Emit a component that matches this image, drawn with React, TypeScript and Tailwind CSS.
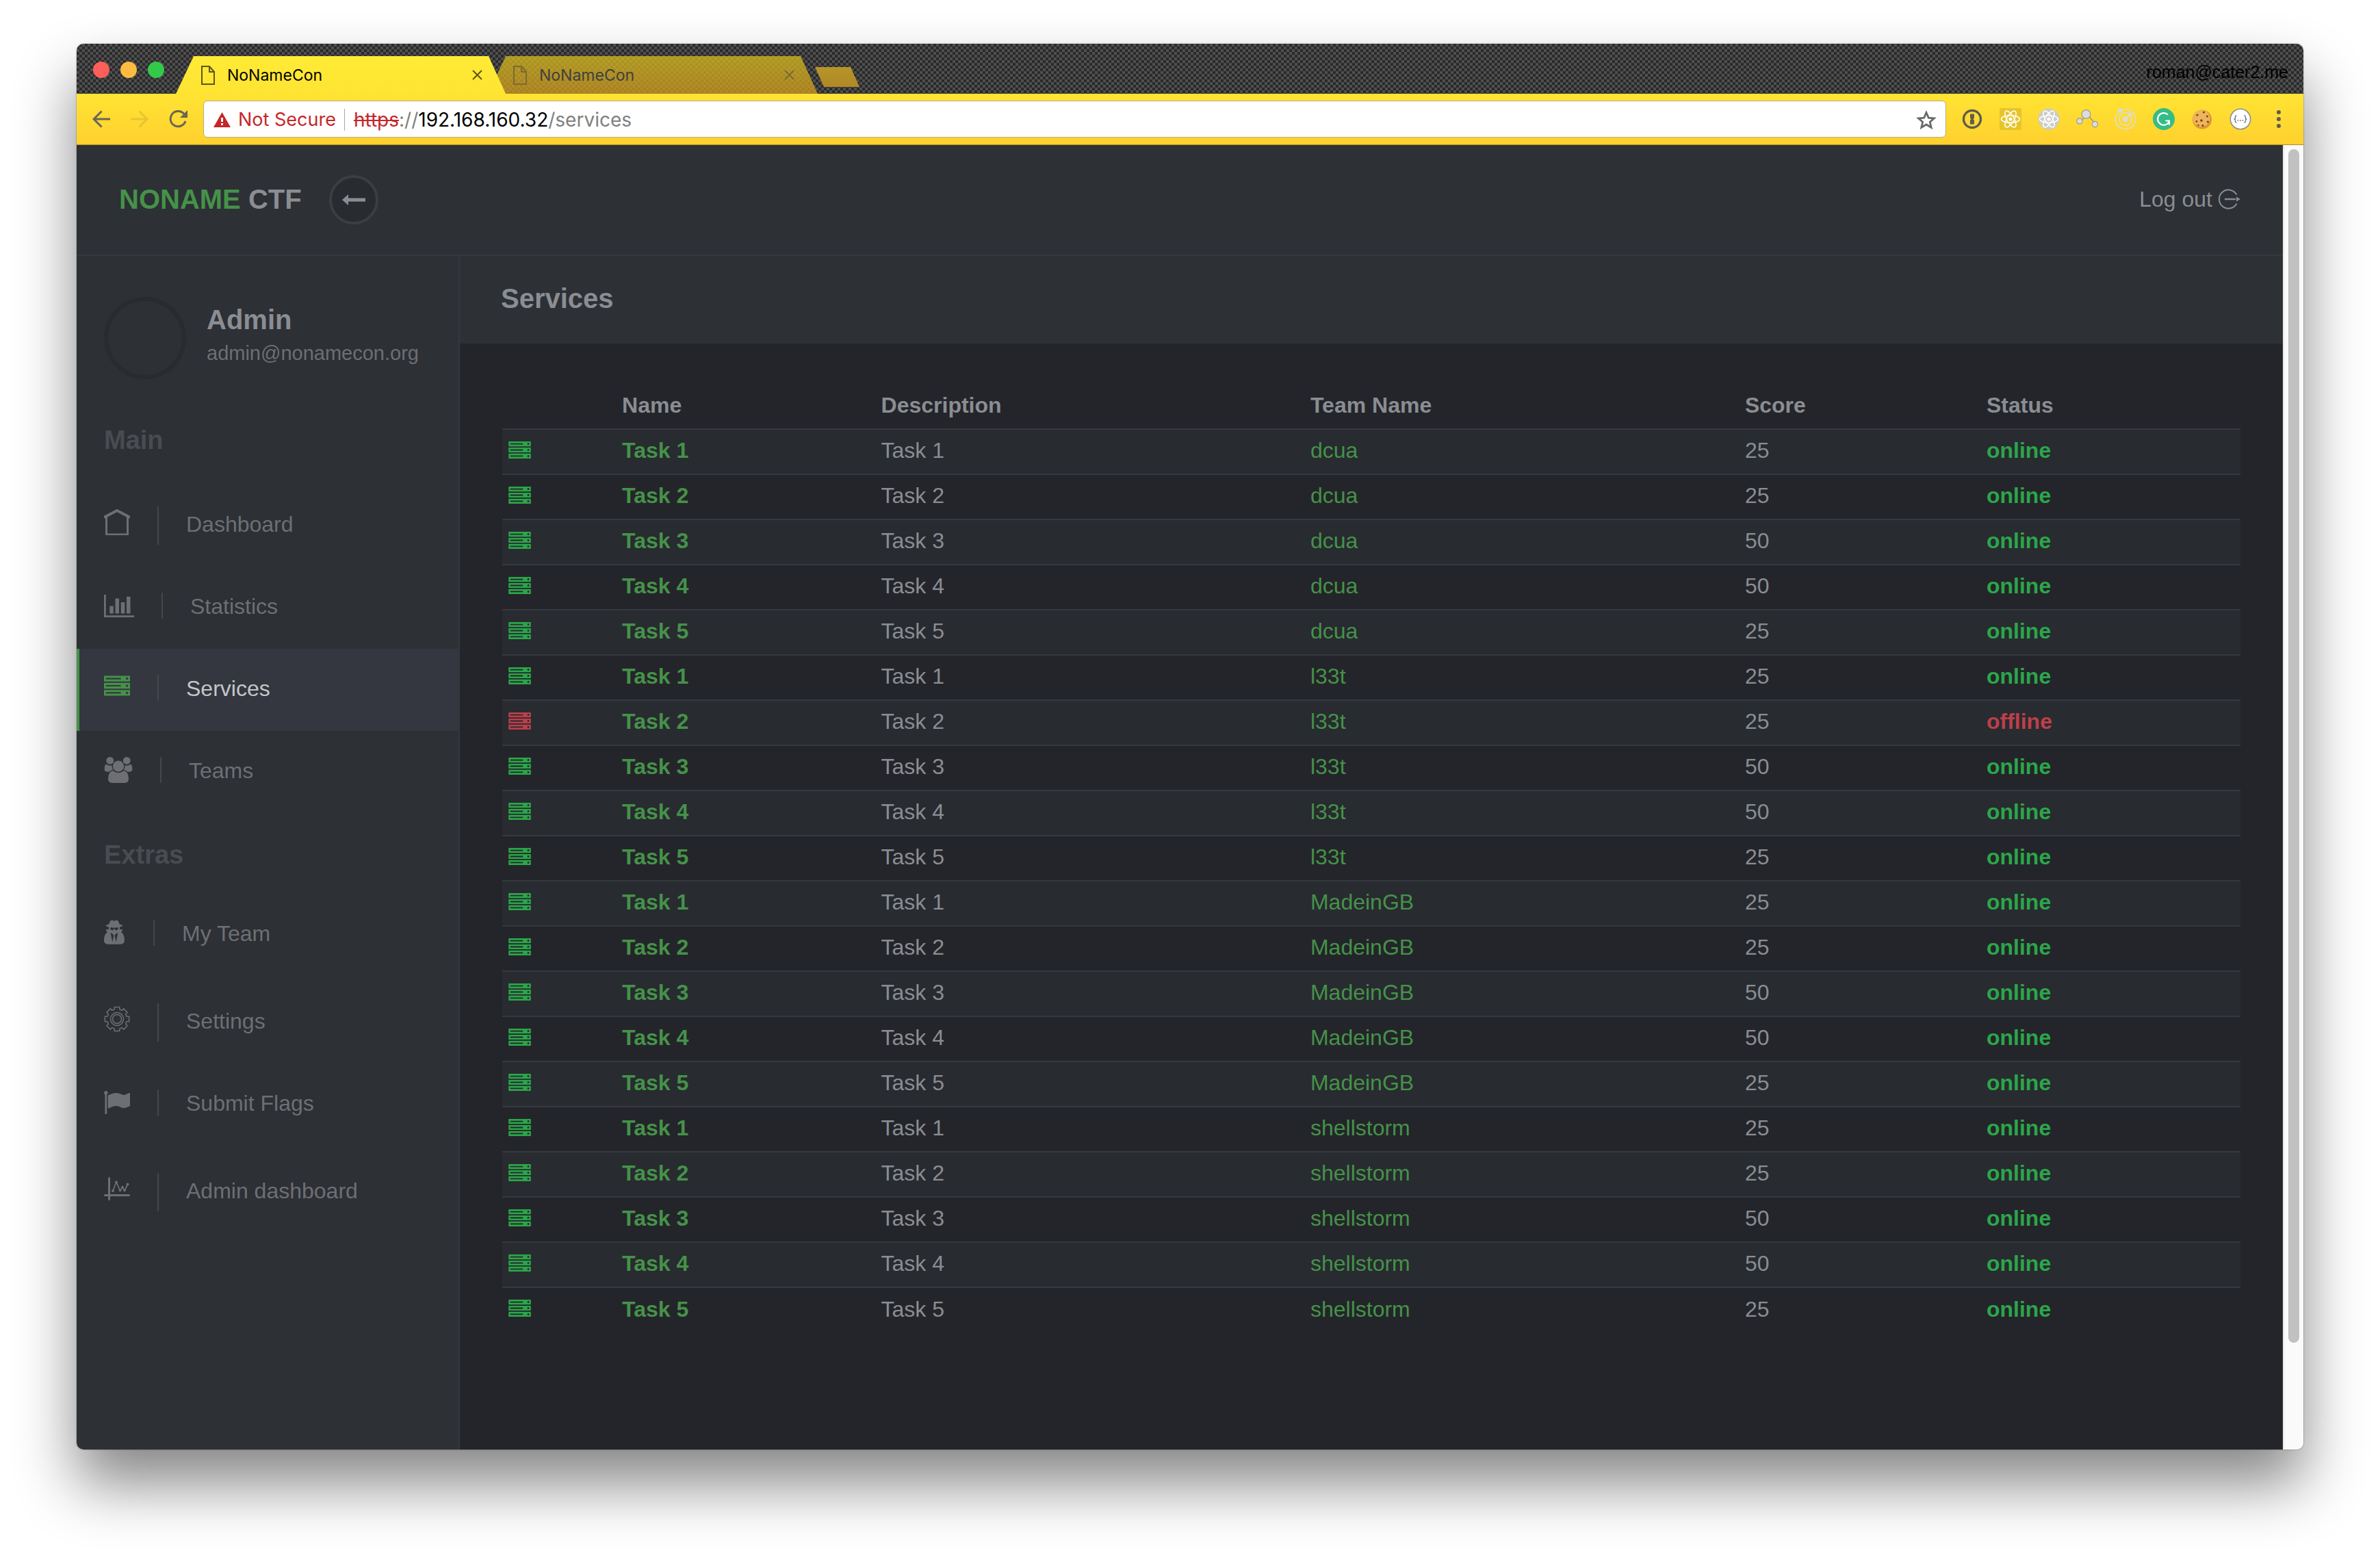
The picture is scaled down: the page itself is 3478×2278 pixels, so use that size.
import type { ReactNode } from "react";
import clsx from "clsx";

/* ---------- icons ---------- */

function PageIcon() {
  return (
    <svg className="h-7 w-5 shrink-0" viewBox="0 0 20 28" fill="none" stroke="currentColor" strokeWidth="2" aria-hidden="true">
      <path d="M1 1h11l7 8v18H1z" />
      <path d="M12 1v8h7" />
    </svg>
  );
}

function CloseIcon() {
  return (
    <svg className="size-[15px]" viewBox="0 0 15 15" fill="none" stroke="currentColor" strokeWidth="2" aria-hidden="true">
      <path d="M1 1l13 13M14 1L1 14" />
    </svg>
  );
}

function ServerIcon({ className }: { className: string }) {
  return (
    <svg className={className} viewBox="0 0 39 30" fill="currentColor" fillRule="evenodd" aria-hidden="true">
      {[0, 10.7, 21.4].map((y) => (
        <path
          key={y}
          transform={`translate(0 ${y})`}
          d="M0 0h39v8.600H0zM2.800 3.200h22.400v2.200H2.800zM34.500 2.500a1.800 1.800 0 1 0 .01 3.600a1.800 1.800 0 1 0-.01-3.600z"
        />
      ))}
    </svg>
  );
}

function HomeIcon() {
  return (
    <svg className="h-[38px] w-[38px]" viewBox="0 0 38 38" fill="none" stroke="currentColor" aria-hidden="true">
      <path d="M0 12L19 2l19 10" strokeWidth="4" />
      <path d="M3.500 11v26h31V11" strokeWidth="3" />
    </svg>
  );
}

function BarChartIcon() {
  return (
    <svg className="h-[33px] w-11" viewBox="0 128 2048 1536" fill="currentColor" aria-hidden="true">
      <path d="M640 896v512h-256v-512h256zm384-512v1024h-256v-1024h256zm1024 1152v128h-2048v-1536h128v1408h1920zm-640-896v768h-256v-768h256zm384-384v1152h-256v-1152h256z" />
    </svg>
  );
}

function UsersIcon() {
  return (
    <svg className="h-[38px] w-[42px]" viewBox="0 0 1920 1792" fill="currentColor" aria-hidden="true">
      <path d="M593 896q-162 5-265 128h-134q-82 0-138-40.5t-56-118.5q0-353 124-353 6 0 43.5 21t97.5 42.5 119 21.5q67 0 133-23-5 37-5 66 0 139 81 256zm1071 637q0 120-73 189.500t-194 69.500h-874q-121 0-194-69.500t-73-189.500q0-53 3.500-103.500t14-109 26.500-108.500 43-97.500 62-81 85.500-53.500 111.500-20q10 0 43 21.500t73 48 107 48 135 21.500 135-21.500 107-48 73-48 43-21.500q61 0 111.500 20t85.500 53.500 62 81 43 97.500 26.500 108.500 14 109 3.500 103.500zm-1024-1277q0 106-75 181t-181 75-181-75-75-181 75-181 181-75 181 75 75 181zm704 384q0 159-112.500 271.500t-271.500 112.500-271.500-112.500-112.500-271.500 112.500-271.500 271.500-112.500 271.500 112.500 112.500 271.500zm576 225q0 78-56 118.500t-138 40.500h-134q-103-123-265-128 81-117 81-256 0-29-5-66 66 23 133 23 59 0 119-21.500t97.500-42.500 43.500-21q124 0 124 353zm-128-609q0 106-75 181t-181 75-181-75-75-181 75-181 181-75 181 75 75 181z" />
    </svg>
  );
}

function SpyIcon() {
  return (
    <svg className="h-[38px] w-8" viewBox="128 0 1408 1792" preserveAspectRatio="xMinYMid meet" fill="currentColor" fillRule="evenodd" aria-hidden="true">
      <path d="M704 1536l96-448-96-128-128-64zm256 0l128-640-128 64-96 128zm160-988q-2-4-4-6-10-8-96-8-70 0-167 19-7 2-21 2t-21-2q-97-19-167-19-86 0-96 8-2 2-4 6 2 18 4 27 2 3 7.500 6.500t7.500 10.500q2 4 7.500 20.500t7 20.500 7.500 17 8.500 17 9 14 12 13.500 14 9.500 17.500 8 20.500 4 24.500 2q36 0 59-12.500t32.500-30 14.500-34.500 11.500-29.500 17.500-12.500h12q11 0 17.500 12.500t11.500 29.500 14.500 34.500 32.500 30 59 12.500q13 0 24.500-2t20.500-4 17.500-8 14-9.500 12-13.500 9-14 8.500-17 7.500-17 7-20.500 7.500-20.500q2-7 7.500-10.500t7.500-6.500q2-9 4-27zm416 879q0 121-73 190t-194 69h-874q-121 0-194-69t-73-190q0-61 4.500-118t19-125.500 37.500-123.500 63.500-103.500 93.500-74.500l-90-220h214q-22-64-22-128 0-12 2-32-194-40-194-96 0-57 210-99 17-62 51.500-134t70.500-114q32-37 76-37 30 0 84 31t84 31 84-31 84-31q44 0 76 37 36 42 70.500 114t51.500 134q210 42 210 99 0 56-194 96 7 81-20 160h214l-82 225q63 33 107.500 96.500t65.500 143.500 29 151.500 8 148.500z" />
    </svg>
  );
}

function FlagIcon() {
  return (
    <svg className="h-[34px] w-[38px]" viewBox="64 128 1728 1536" fill="currentColor" aria-hidden="true">
      <path d="M320 256q0 72-64 110v1266q0 13-9.500 22.500t-22.500 9.500h-64q-13 0-22.500-9.500t-9.500-22.500v-1266q-64-38-64-110 0-53 37.500-90.500t90.500-37.500 90.500 37.500 37.500 90.500zm1472 64v763q0 25-12.500 38.500t-39.500 27.500q-215 116-369 116-61 0-123.500-22t-108.500-48-115.500-48-142.500-22q-192 0-464 146-17 9-33 9-26 0-45-19t-19-45v-742q0-32 31-55 21-14 79-43 236-120 421-120 107 0 200 29t219 88q38 19 88 19 54 0 117.500-21t110-47 88-47 54.500-21q26 0 45 19t19 45z" />
    </svg>
  );
}

function gearOutline(): string {
  const parts: string[] = [];
  for (let i = 0; i < 8; i++) {
    const mid = (i * Math.PI) / 4 - Math.PI / 2;
    const corners: [number, number][] = [
      [-0.27, 14.5],
      [-0.21, 18],
      [0.21, 18],
      [0.27, 14.5],
    ];
    for (const [da, r] of corners) {
      const x = (19 + r * Math.cos(mid + da)).toFixed(2);
      const y = (19 + r * Math.sin(mid + da)).toFixed(2);
      parts.push(`${x} ${y}`);
    }
  }
  return `M${parts.join("L")}Z`;
}
const GEAR = gearOutline();

function GearIcon() {
  return (
    <svg className="size-[38px]" viewBox="0 0 38 38" fill="none" stroke="currentColor" strokeWidth="1.500" strokeLinejoin="round" aria-hidden="true">
      <path d={GEAR} />
      <circle cx="19" cy="19" r="9.500" />
      <circle cx="19" cy="19" r="6.500" />
    </svg>
  );
}

function LineChartIcon() {
  return (
    <svg className="h-[34px] w-[38px]" viewBox="0 0 38 34" fill="none" stroke="currentColor" strokeLinecap="round" strokeLinejoin="round" aria-hidden="true">
      <path d="M7.500 1.500v31M1.500 26.500h35" strokeWidth="3" />
      <path d="M13 20l5-13 5.500 13 3.500-5.500 3 5.500 4.500-9.500" strokeWidth="1.800" />
      <g fill="currentColor" stroke="none">
        <circle cx="13" cy="20" r="2" />
        <circle cx="18" cy="7.500" r="2" />
        <circle cx="23.500" cy="19.500" r="1.800" />
        <circle cx="27" cy="14.500" r="1.800" />
        <circle cx="30" cy="19.500" r="1.800" />
        <circle cx="34.500" cy="10.500" r="2" />
      </g>
    </svg>
  );
}

function AtomShape() {
  return (
    <g fill="none" stroke="#fff" strokeWidth="1.500">
      <ellipse cx="16" cy="16" rx="13.500" ry="5.200" />
      <ellipse cx="16" cy="16" rx="13.500" ry="5.200" transform="rotate(60 16 16)" />
      <ellipse cx="16" cy="16" rx="13.500" ry="5.200" transform="rotate(120 16 16)" />
      <circle cx="16" cy="16" r="2.600" fill="#fff" stroke="none" />
    </g>
  );
}

/* ---------- browser chrome ---------- */

function Extension({ label, children }: { label: string; children: ReactNode }) {
  return (
    <button type="button" aria-label={label} className="size-8 shrink-0">
      <svg className="size-8" viewBox="0 0 32 32" aria-hidden="true">
        {children}
      </svg>
    </button>
  );
}

function Extensions() {
  return (
    <div className="flex items-center gap-6">
      <Extension label="Password manager">
        <circle cx="16" cy="16" r="12.500" fill="none" stroke="#5f5c52" strokeWidth="3.400" />
        <path d="M13 8.500h6v6l-1.500 1.500 1.500 1.500v6h-6v-6l1.500-1.500-1.500-1.500z" fill="#5f5c52" />
      </Extension>
      <Extension label="React sandbox">
        <rect width="32" height="32" rx="2" fill="#e6c52b" />
        <AtomShape />
      </Extension>
      <Extension label="React developer tools">
        <circle cx="16" cy="16" r="15.500" fill="#cbcbc8" />
        <AtomShape />
      </Extension>
      <Extension label="Node graph">
        <path d="M16 9L7 19M16 9l13 15" stroke="#a39a78" strokeWidth="1.500" />
        <g fill="#dcdcdc" stroke="#9c9c96" strokeWidth="1.200">
          <circle cx="14.500" cy="9" r="6.400" />
          <circle cx="5" cy="19" r="4.200" />
          <circle cx="27.500" cy="23.500" r="4.200" />
        </g>
      </Extension>
      <Extension label="Orbit">
        <g fill="none" stroke="#e6dda6" strokeWidth="2.200">
          <circle cx="16" cy="16" r="14.500" />
          <circle cx="16" cy="16" r="9.200" />
        </g>
        <g fill="#dedcd0">
          <circle cx="16" cy="16" r="4.400" />
          <circle cx="8.500" cy="3.500" r="3.200" />
          <circle cx="22.500" cy="10" r="3.200" />
        </g>
      </Extension>
      <Extension label="Grammar checker">
        <circle cx="16" cy="16" r="16" fill="#35bd87" />
        <path d="M22 9.500A8.800 8.800 0 1 0 24 19.500M18.500 18.500H24v6" fill="none" stroke="#fff" strokeWidth="2.200" />
      </Extension>
      <Extension label="Cookies">
        <circle cx="16" cy="16.500" r="14" fill="#dc9434" />
        <circle cx="15" cy="15" r="12.500" fill="#efb45a" />
        <g fill="#6d4320">
          <circle cx="9" cy="10" r="1.600" />
          <circle cx="18.500" cy="6" r="1.600" />
          <circle cx="15" cy="18" r="1.800" />
          <circle cx="23.500" cy="12" r="1.500" />
          <circle cx="8" cy="19.500" r="1.400" />
          <circle cx="24.500" cy="20" r="1.600" />
          <circle cx="17" cy="25.500" r="1.600" />
          <circle cx="10.500" cy="25" r="1.200" />
        </g>
      </Extension>
      <Extension label="JSON viewer">
        <circle cx="16" cy="16" r="14.700" fill="#fff" stroke="#8f8f8f" strokeWidth="1.600" />
        <path d="M10.500 11q-2 0-2 2v1.500q0 1.500-2 1.500 2 0 2 1.500V19q0 2 2 2M21.500 11q2 0 2 2v1.500q0 1.500 2 1.500-2 0-2 1.500V19q0 2-2 2" fill="none" stroke="#7a7a7a" strokeWidth="1.400" />
        <g fill="#7a7a7a">
          <circle cx="12.500" cy="18" r="0.900" />
          <circle cx="16" cy="18" r="0.900" />
          <circle cx="19.500" cy="18" r="0.900" />
        </g>
      </Extension>
      <Extension label="Browser menu">
        <g fill="#5f5c52">
          <circle cx="16" cy="6" r="3" />
          <circle cx="16" cy="16" r="3" />
          <circle cx="16" cy="26" r="3" />
        </g>
      </Extension>
    </div>
  );
}

function Tab({ active }: { active?: boolean }) {
  return (
    <div
      className={clsx(
        "flex h-[55px] w-[482px] items-center pr-[34px] pl-[37px] [clip-path:polygon(26px_0,457px_0,100%_100%,0_100%)]",
        active
          ? "relative z-10 bg-linear-to-b from-[#ffeb35] to-[#ffe433] text-black"
          : "-ml-[26px] bg-linear-to-b from-[#d6bb1e]/75 to-[#d39c1d]/75 text-[#3f3f3f]",
      )}
    >
      <span className={active ? "text-[#5f5614]" : "text-[#7b6a33]"}>
        <PageIcon />
      </span>
      <span className="ml-[18px] text-[23px] leading-7">NoNameCon</span>
      <button type="button" aria-label="Close tab" className={clsx("ml-auto", active ? "text-[#5f5614]" : "text-[#7b6a33]")}>
        <CloseIcon />
      </button>
    </div>
  );
}

function TitleBar() {
  return (
    <div className="flex h-[73px] items-end bg-[repeating-conic-gradient(#2a2a2a_0_25%,#4f4f4f_0_50%)] bg-[length:8px_8px] pr-[22px] pl-6 font-[Inter,sans-serif]">
      <div className="mb-[23px] flex gap-4">
        <button type="button" aria-label="Close window" className="size-6 rounded-full bg-[#fe5f5a]" />
        <button type="button" aria-label="Minimise window" className="size-6 rounded-full bg-[#fdbc40]" />
        <button type="button" aria-label="Zoom window" className="size-6 rounded-full bg-[#34ca49]" />
      </div>
      <div className="ml-[17px] flex">
        <Tab active />
        <Tab />
      </div>
      <button
        type="button"
        aria-label="New tab"
        className="-ml-1 mb-[10px] h-[29px] w-[65px] bg-linear-to-b from-[#b5962a] to-[#b08824] [clip-path:polygon(0_0,52px_0,100%_100%,13px_100%)]"
      />
      <span className="mb-[18px] ml-auto font-['Liberation_Sans',Arial,sans-serif] text-[25px] leading-7 text-black">roman@cater2.me</span>
    </div>
  );
}

function Toolbar() {
  return (
    <div className="flex h-[75px] items-center border-b border-[#b08a1e] bg-linear-to-b from-[#ffe433] to-[#ffd02e] pr-5 pl-[23px] font-[Inter,sans-serif] text-[28px] leading-9">
      <div className="flex gap-[30px] text-[#696557]">
        <button type="button" aria-label="Back">
          <svg className="size-[26px]" viewBox="0 0 26 26" fill="none" stroke="currentColor" strokeWidth="3" aria-hidden="true">
            <path d="M26 13H2M13.500 1.500L2 13l11.500 11.500" />
          </svg>
        </button>
        <button type="button" aria-label="Forward" className="text-[#e6c530]">
          <svg className="size-[26px]" viewBox="0 0 26 26" fill="none" stroke="currentColor" strokeWidth="3" aria-hidden="true">
            <path d="M0 13h24M12.500 1.500L24 13 12.500 24.500" />
          </svg>
        </button>
        <button type="button" aria-label="Reload">
          <svg className="h-[26px] w-[27px]" viewBox="0 0 27 26" aria-hidden="true">
            <path d="M22 5.500A11.200 11.200 0 1 0 24 16" fill="none" stroke="currentColor" strokeWidth="3" />
            <path d="M27 0v11H16z" fill="currentColor" />
          </svg>
        </button>
      </div>
      <div className="mr-[22px] ml-[23px] flex h-[54px] flex-1 items-center rounded-md border border-[#b9ad80] bg-white pt-[2px] pr-[13px] pl-[14px]">
        <svg className="h-[22px] w-[25px]" viewBox="0 0 25 22" aria-hidden="true">
          <path d="M12.500 0L25 22H0z" fill="#c4272b" />
          <path d="M11 8h3v6h-3zM11 16h3v3h-3z" fill="#fff" />
        </svg>
        <span className="ml-[11px] text-[27px] text-[#c4272b]">Not Secure</span>
        <span className="mr-[13px] ml-3 h-8 w-px bg-[#a8a8a8]" />
        <label htmlFor="address" className="flex text-[#808080]">
          <span className="text-[#c4272b] line-through decoration-2">https</span>
          <span>://</span>
        </label>
        <input id="address" defaultValue="192.168.160.32" spellCheck={false} className="[field-sizing:content] bg-transparent text-black outline-none" />
        <span className="text-[#808080]">/services</span>
        <button type="button" aria-label="Bookmark this page" className="ml-auto">
          <svg className="h-7 w-[30px]" viewBox="0 0 30 28" fill="none" stroke="#696969" strokeWidth="2.800" aria-hidden="true">
            <path d="M15 3.500l3.300 7.600 8.200.7-6.200 5.400 1.900 8.100-7.200-4.300-7.200 4.300 1.900-8.100-6.200-5.400 8.200-.7z" />
          </svg>
        </button>
      </div>
      <Extensions />
    </div>
  );
}

/* ---------- application ---------- */

function AppHeader() {
  return (
    <header className="flex h-[162px] items-center border-b-2 border-[#34373d] px-[62px]">
      <a href="#home" className="pb-[3px] text-[40px] leading-[48px] font-bold">
        <span className="text-[#459249]">NONAME</span> CTF
      </a>
      <button
        type="button"
        aria-label="Collapse sidebar"
        className="ml-10 flex size-[72px] items-center justify-center rounded-full border-4 border-[#3b3e43] bg-[#282b2f]"
      >
        <svg className="h-4 w-[34px]" viewBox="0 0 34 16" fill="currentColor" aria-hidden="true">
          <path d="M0 8L9 0v5.500h25v5H9V16z" />
        </svg>
      </button>
      <a href="#logout" className="ml-auto flex items-center gap-[9px] pb-[3px] text-[32px] leading-[48px]">
        Log out
        <svg className="h-[30px] w-8" viewBox="0 0 32 30" fill="none" stroke="currentColor" strokeWidth="2" aria-hidden="true">
          <path d="M26.500 8.500A13.600 13.600 0 1 0 26.500 21.500" />
          <path d="M9 15h16" strokeWidth="2.500" />
          <path d="M26 11.500l6 3.500-6 3.500z" fill="currentColor" stroke="none" />
        </svg>
      </a>
    </header>
  );
}

type NavItem = { label: string; icon: ReactNode; tall?: boolean; active?: boolean };

const mainNav: NavItem[] = [
  { label: "Dashboard", icon: <HomeIcon />, tall: true },
  { label: "Statistics", icon: <BarChartIcon /> },
  { label: "Services", icon: <ServerIcon className="h-[30px] w-[38px]" />, active: true },
  { label: "Teams", icon: <UsersIcon /> },
];

const extrasNav: NavItem[] = [
  { label: "My Team", icon: <SpyIcon /> },
  { label: "Settings", icon: <GearIcon />, tall: true },
  { label: "Submit Flags", icon: <FlagIcon /> },
  { label: "Admin dashboard", icon: <LineChartIcon />, tall: true },
];

function NavList({ title, items }: { title: string; items: NavItem[] }) {
  return (
    <section>
      <h2 className="mb-[34px] pl-10 text-[38px] leading-[46px] font-bold text-[#494c51]">{title}</h2>
      <ul>
        {items.map(({ label, icon, tall, active }) => (
          <li key={label}>
            <a
              href={`#${label.toLowerCase().replace(" ", "-")}`}
              aria-current={active ? "page" : undefined}
              className={clsx(
                "flex items-start gap-10 border-l-4 pl-9 text-[32px] leading-[48px]",
                tall ? "h-32 pt-10" : "h-[120px] pt-[34px]",
                active ? "border-[#459249] bg-[#34373f] text-[#c4c6ca]" : "border-transparent text-[#6d6f73]",
              )}
            >
              <span
                className={clsx(
                  "flex items-center border-r-2 border-[#44474c] pr-10",
                  tall ? "h-14 pb-[10px]" : "mt-1 h-[38px]",
                  active && "pb-[6px] text-[#459249]",
                )}
              >
                {icon}
              </span>
              <span className={tall ? "mt-[2px]" : ""}>{label}</span>
            </a>
          </li>
        ))}
      </ul>
    </section>
  );
}

function Sidebar() {
  return (
    <aside className="w-[560px] shrink-0 border-r-2 border-[#34373d]">
      <div className="flex items-center gap-[30px] py-[60px] pl-10">
        <div className="size-[120px] shrink-0 rounded-full border-[6px] border-[#282b2f]" />
        <div className="pb-1">
          <p className="text-[40px] leading-[48px] font-bold">Admin</p>
          <p className="text-[29px] leading-[50px] text-[#6d6f73]">admin@nonamecon.org</p>
        </div>
      </div>
      <nav className="flex flex-col gap-[38px] pt-[6px]">
        <NavList title="Main" items={mainNav} />
        <NavList title="Extras" items={extrasNav} />
      </nav>
    </aside>
  );
}

const teams = ["dcua", "l33t", "MadeinGB", "shellstorm"];
const scores = [25, 25, 50, 50, 25];

const services = teams.flatMap((team) =>
  scores.map((score, i) => ({
    team,
    score,
    task: `Task ${i + 1}`,
    online: !(team === "l33t" && i === 1),
  })),
);

function ServicesTable() {
  return (
    <table className="w-full table-fixed text-left text-[32px] leading-[48px]">
      <colgroup>
        <col className="w-[6.5%]" />
        <col className="w-[14.9%]" />
        <col className="w-[24.7%]" />
        <col className="w-[25%]" />
        <col className="w-[13.9%]" />
        <col className="w-[15%]" />
      </colgroup>
      <thead>
        <tr>
          <th className="p-2" aria-label="State" />
          {["Name", "Description", "Team Name", "Score", "Status"].map((h) => (
            <th key={h} scope="col" className="px-[10px] pt-[6px] pb-[10px] font-bold">
              {h}
            </th>
          ))}
        </tr>
      </thead>
      <tbody>
        {services.map(({ team, score, task, online }) => {
          const stateColor = online ? "text-[#2ba64a]" : "text-[#bd3f4a]";
          return (
            <tr key={team + task} className="h-[66px] border-t-2 border-[#343a3f] odd:bg-[#282b30]">
              <td className={clsx("px-[9px] pb-[6px]", stateColor)}>
                <ServerIcon className="h-[25px] w-[33px]" />
              </td>
              <td className="px-[10px] pt-[6px] pb-[10px]">
                <a href="#task" className="font-bold text-[#459249]">
                  {task}
                </a>
              </td>
              <td className="px-[10px] pt-[6px] pb-[10px]">{task}</td>
              <td className="px-[10px] pt-[6px] pb-[10px]">
                <a href="#team" className="text-[#459249]">
                  {team}
                </a>
              </td>
              <td className="px-[10px] pt-[6px] pb-[10px]">{score}</td>
              <td className={clsx("px-[10px] pt-[6px] pb-[10px] font-bold", stateColor)}>{online ? "online" : "offline"}</td>
            </tr>
          );
        })}
      </tbody>
    </table>
  );
}

export default function App() {
  return (
    <div className="flex min-h-screen flex-col bg-white px-28 pt-16 pb-40">
      <div className="flex flex-1 flex-col overflow-hidden rounded-[10px] shadow-[0_0_2px_rgba(0,0,0,0.5),0_50px_88px_rgba(0,0,0,0.48)]">
        <TitleBar />
        <Toolbar />
        <div className="flex flex-1">
          <div className="flex flex-1 flex-col bg-[#2d3035] font-['Liberation_Sans',Arial,sans-serif] text-[#8a8d93]">
            <AppHeader />
            <div className="flex flex-1">
              <Sidebar />
              <main className="flex-1 bg-[#24252a]">
                <div className="h-32 bg-[#2d3035] px-[60px] py-[38px]">
                  <h1 className="text-[40px] leading-[48px] font-bold">Services</h1>
                </div>
                <div className="px-[62px] pt-[60px]">
                  <ServicesTable />
                </div>
              </main>
            </div>
          </div>
          <div className="w-[30px] border-l-2 border-[#e8e8e8] bg-[#fafafa] pt-[6px] pl-[6px]">
            <div className="h-[1744px] w-4 rounded-full bg-[#c1c1c1]" />
          </div>
        </div>
      </div>
    </div>
  );
}
